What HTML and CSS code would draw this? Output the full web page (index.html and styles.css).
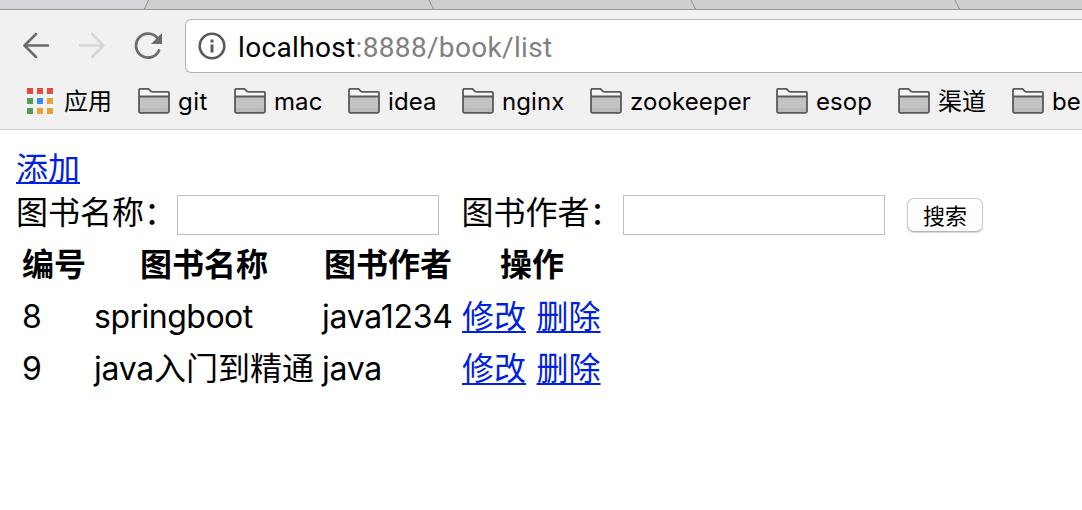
FILE: index.html
```
<!DOCTYPE html>
<html lang="zh-CN">
<head>
<meta charset="utf-8">
<title>图书列表</title>
<link rel="stylesheet" href="styles.css">
</head>
<body>
<svg class="defs" width="0" height="0">
  <symbol id="folder" viewBox="0 0 32 26">
    <path d="M1 8V2.500Q1 1 2.500 1H10Q11 1 12 2L14 4H29.500Q31 4 31 5.500V8Z" fill="#f5f5f5"/>
    <path d="M1 8.500H31V24H1Z" fill="#c3c3c3"/>
    <path d="M2 20H30V24H2Z" fill="#bababa"/>
    <path d="M1 8.700H31M1 2.500Q1 1 2.500 1H9.700Q10.500 1 11.200 1.800L12.700 3.300Q13.400 4 14.500 4H30Q31 4 31 5V23.500Q31 25 29.500 25H2.500Q1 25 1 23.500Z" transform="translate(0 -.2)" fill="none" stroke="#5a5a5a" stroke-width="1.800"/>
  </symbol>
</svg>
<header class="browser">
  <svg class="tabs" width="1082" height="10" viewBox="0 0 1082 10">
    <path d="M0 0H148.500L144.500 9H0Z" fill="#d5d7da"/>
    <path d="M148.500 0L144.500 9M429 0L433.500 9M691 0L695.500 9M955 0L959.500 9" fill="none" stroke="#8e8e8e"/>
    <path d="M0 9.500H1082" stroke="#989898"/>
  </svg>
  <div class="toolbar">
    <svg class="nav" width="162" height="54" viewBox="0 0 162 54" fill="none" stroke-width="2.600" stroke-linecap="round" stroke-linejoin="round">
      <path d="M25 26.500H1.500M13 15L1.500 26.500L13 38" stroke="#6c6c6c"/>
      <path d="M57 26.500H80.500M69 15L80.500 26.500L69 38" stroke="#d7d7d7"/>
      <path d="M134.500 19.200A12 12 0 1 0 136 31.500" stroke="#6c6c6c" stroke-width="2.800"/>
      <path d="M139 14V25H128Z" fill="#6c6c6c"/>
    </svg>
    <div class="omnibox">
      <svg width="28" height="28" viewBox="0 0 28 28"><circle cx="14" cy="14" r="12.300" fill="none" stroke="#5a5a5a" stroke-width="2.600"/><path d="M12.500 7.500h3v3h-3zM12.500 12.500h3v8h-3z" fill="#5a5a5a"/></svg>
      <span class="host">localhost</span><span class="path">:8888/book/list</span>
    </div>
  </div>
  <nav class="bookmarks">
    <span class="mark apps"><svg width="26" height="26" viewBox="0 0 26 26"><path d="M0 0h6v6H0zM10 0h6v6h-6zM20 0h6v6h-6z" fill="#e34b40"/><path d="M0 10h6v6H0zM0 20h6v6H0z" fill="#559a5b"/><path d="M10 10h6v6h-6z" fill="#3d8bef"/><path d="M20 10h6v6h-6zM10 20h6v6h-6zM20 20h6v6h-6z" fill="#e6a237"/></svg><span class="cjk">应用</span></span>
    <span class="mark git"><svg width="32" height="26"><use href="#folder"/></svg><span>git</span></span>
    <span class="mark mac"><svg width="32" height="26"><use href="#folder"/></svg><span>mac</span></span>
    <span class="mark idea"><svg width="32" height="26"><use href="#folder"/></svg><span>idea</span></span>
    <span class="mark nginx"><svg width="32" height="26"><use href="#folder"/></svg><span>nginx</span></span>
    <span class="mark zookeeper"><svg width="32" height="26"><use href="#folder"/></svg><span>zookeeper</span></span>
    <span class="mark esop"><svg width="32" height="26"><use href="#folder"/></svg><span>esop</span></span>
    <span class="mark channel"><svg width="32" height="26"><use href="#folder"/></svg><span class="cjk">渠道</span></span>
    <span class="mark last"><svg width="32" height="26"><use href="#folder"/></svg><span>be</span></span>
  </nav>
</header>
<main class="page">
  <div class="add"><a href="#">添加</a></div>
  <form class="search">
    <label>图书名称：</label><input type="text">
    <label class="second">图书作者：</label><input type="text">
    <button type="button">搜索</button>
  </form>
  <table class="books">
    <colgroup><col class="c-id"><col class="c-name"><col class="c-author"><col class="c-ops"></colgroup>
    <tr><th>编号</th><th>图书名称</th><th>图书作者</th><th>操作</th></tr>
    <tr><td>8</td><td class="tight">springboot</td><td class="author">java1234</td><td><a href="#">修改</a><a class="del" href="#">删除</a></td></tr>
    <tr><td>9</td><td><span class="author">java</span>入门到精通</td><td class="author">java</td><td><a href="#">修改</a><a class="del" href="#">删除</a></td></tr>
  </table>
</main>
</body>
</html>
```
FILE: styles.css
```
* { box-sizing: border-box; }
body {
  margin: 0;
  width: 1082px;
  height: 510px;
  overflow: hidden;
  background: #fff;
  color: #000;
  font-family: Inter, "Noto Sans CJK SC", sans-serif;
}
svg { display: block; flex: none; }
.defs { position: absolute; }
.browser { height: 130px; background: #f1f1f1; border-bottom: 1px solid #d0d0d0; }
.tabs { background: #cfcfcf; }
.toolbar { display: flex; padding: 9px 0 0 23px; }
.omnibox {
  display: flex;
  align-items: center;
  flex: 1;
  height: 54px;
  padding-left: 12px;
  border: 1px solid #b4b4b4;
  border-right: 0;
  border-radius: 6px 0 0 6px;
  background: #fff;
  font-family: Roboto, sans-serif;
  font-size: 28px;
  letter-spacing: 0.34px;
  white-space: nowrap;
}
.host, .path { padding-top: 2px; }
.host { margin-left: 12px; }
.path { color: #808080; }
.bookmarks {
  display: flex;
  height: 56px;
  padding-left: 27px;
  overflow: hidden;
  font-size: 24px;
  letter-spacing: 0.1px;
  white-space: nowrap;
}
.mark { display: flex; flex: none; align-items: center; height: 56px; }
.mark svg { margin-right: 8px; }
.mark .cjk { padding-bottom: 3px; }
.apps { width: 111px; }
.apps svg { margin-right: 11px; }
.git { width: 96px; letter-spacing: 0.5px; }
.mac, .idea, .channel { width: 114px; }
.nginx { width: 128px; }
.zookeeper { width: 186px; }
.esop { width: 122px; }
.last { letter-spacing: 0; }
.page { padding: 16px; font-size: 32px; }
.page a { color: #0022e0; text-decoration: underline; text-decoration-thickness: 2px; text-underline-offset: 3px; }
.add { height: 44px; padding-top: 1px; line-height: 44px; }
.add a { text-underline-offset: 2px; }
.search { display: flex; align-items: center; height: 47px; padding-bottom: 1px; }
.search label { width: 161px; line-height: 46px; white-space: nowrap; }
.search .second { width: 162px; margin-left: 22px; padding-left: 0.5px; }
.search input { width: 262px; height: 40px; margin: 4px 0 0; padding: 0; border: 1px solid #bdbdbd; outline: 0; }
.search button {
  width: 76px;
  height: 34px;
  margin: 4px 0 0 22px;
  padding: 0;
  border: 1px solid #c9c9c9;
  border-bottom-color: #b4b4b4;
  border-radius: 7px;
  background: #fff;
  box-shadow: 0 1px 1px #d8d8d8;
  color: #000;
  font: 22px/30px "Noto Sans CJK SC", sans-serif;
  padding-bottom: 2px;
}
.books { width: 592px; border-collapse: separate; border-spacing: 4px; table-layout: fixed; }
.c-id { width: 68px; }
.c-name { width: 224px; }
.c-author { width: 136px; }
.c-ops { width: 144px; }
.books th, .books td { height: 48px; padding: 0 2px; line-height: 48px; text-align: left; white-space: nowrap; }
.books th { text-align: center; font-weight: 700; }
.tight { letter-spacing: -0.5px; }
.author { letter-spacing: -0.25px; }
.del { margin-left: 10.5px; }
```
